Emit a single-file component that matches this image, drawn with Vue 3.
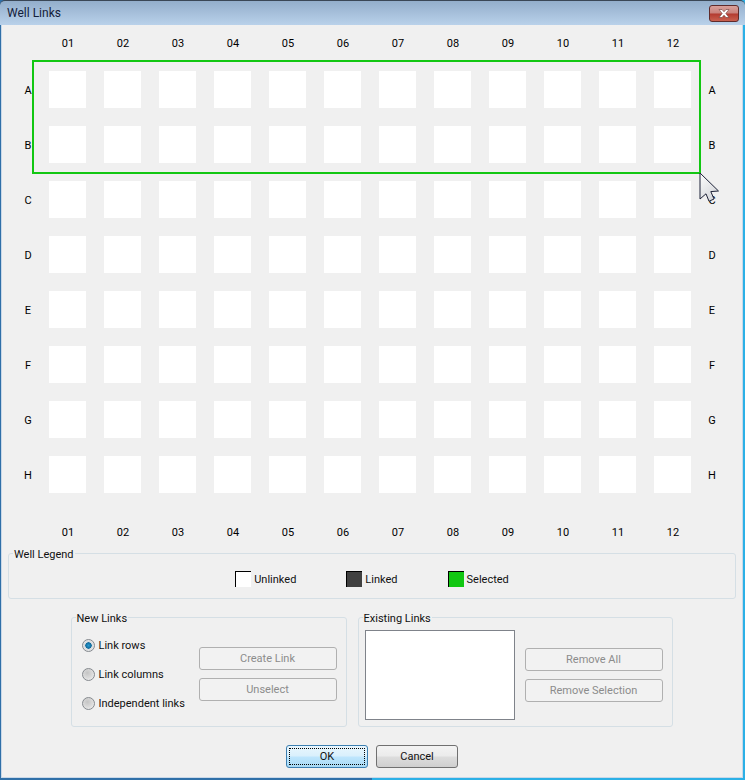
<script setup>
const columns = ['01', '02', '03', '04', '05', '06', '07', '08', '09', '10', '11', '12']
const rows = ['A', 'B', 'C', 'D', 'E', 'F', 'G', 'H']
const legend = [
  { label: 'Unlinked', color: '#ffffff' },
  { label: 'Linked', color: '#404040' },
  { label: 'Selected', color: '#12c712' }
]
const linkModes = [
  { label: 'Link rows', checked: true },
  { label: 'Link columns', checked: false },
  { label: 'Independent links', checked: false }
]
</script>

<template>
  <div class="window">
    <header class="titlebar">
      <span class="title">Well Links</span>
      <button class="close">
        <svg width="16" height="11" viewBox="0 0 16 11">
          <path d="M3 1.5 L6 1.5 L8 3.8 L10 1.5 L13 1.5 L9.8 5.5 L13 9.5 L10 9.5 L8 7.2 L6 9.5 L3 9.5 L6.2 5.5 Z" fill="#ffffff" stroke="#6d3a36" stroke-width="0.6" />
        </svg>
      </button>
    </header>

    <main class="client">
      <section class="plate">
        <div class="corner"></div>
        <div v-for="col in columns" :key="'top' + col" class="col-label">{{ col }}</div>
        <div class="corner"></div>

        <template v-for="row in rows" :key="row">
          <div class="row-label">{{ row }}</div>
          <div v-for="col in columns" :key="row + col" class="cell">
            <div class="well"></div>
          </div>
          <div class="row-label">{{ row }}</div>
        </template>

        <div class="corner"></div>
        <div v-for="col in columns" :key="'bottom' + col" class="col-label col-label-bottom">{{ col }}</div>
        <div class="corner"></div>

        <div class="selection"></div>
      </section>

      <section class="group legend">
        <span class="group-title">Well Legend</span>
        <div v-for="item in legend" :key="item.label" class="legend-item">
          <span class="swatch" :style="{ backgroundColor: item.color }"></span>
          <span>{{ item.label }}</span>
        </div>
      </section>

      <div class="panels">
        <section class="group new-links">
          <span class="group-title">New Links</span>
          <div class="radios">
            <label v-for="mode in linkModes" :key="mode.label" class="radio">
              <span class="radio-dot" :class="{ checked: mode.checked }"></span>
              {{ mode.label }}
            </label>
          </div>
          <div class="buttons">
            <button class="btn" disabled>Create Link</button>
            <button class="btn" disabled>Unselect</button>
          </div>
        </section>

        <section class="group existing-links">
          <span class="group-title">Existing Links</span>
          <div class="listbox"></div>
          <div class="buttons">
            <button class="btn" disabled>Remove All</button>
            <button class="btn" disabled>Remove Selection</button>
          </div>
        </section>
      </div>

      <footer class="actions">
        <button class="action action-default"><span class="focus">OK</span></button>
        <button class="action">Cancel</button>
      </footer>
    </main>

    <svg class="cursor" width="22" height="32" viewBox="0 0 22 32">
      <defs>
        <linearGradient id="cursorFill" x1="0" y1="0" x2="0.6" y2="1">
          <stop offset="0" stop-color="#ffffff" />
          <stop offset="1" stop-color="#d4d6da" />
        </linearGradient>
      </defs>
      <path d="M1 1 L19.5 19 L11.8 19.6 L15 27 L10 29.3 L7 21.8 L1 27 Z" fill="url(#cursorFill)" stroke="#1d2238" stroke-width="1" />
    </svg>
  </div>
</template>

<style>
html, body {
  margin: 0;
  background: #f0f0f0;
}
</style>

<style scoped>
.window {
  position: relative;
  width: 745px;
  height: 780px;
  box-sizing: border-box;
  overflow: hidden;
  display: flex;
  flex-direction: column;
  background: linear-gradient(90deg, #2f6fa8 0%, #2f6fa8 50%, #2bb0e6 50%, #2bb0e6 100%);
  font-family: Roboto, "Open Sans", "Liberation Sans", sans-serif;
  font-size: 11px;
  color: #111111;
}

/* title bar */
.titlebar {
  height: 25px;
  flex: none;
  display: flex;
  align-items: center;
  justify-content: space-between;
  box-sizing: border-box;
  padding: 0 6px 0 7px;
  background: linear-gradient(#93aecb, #b9d1ea);
  border-top: 1px solid #3a4756;
  border-radius: 5px 5px 0 0;
}
.title {
  font-size: 12px;
  color: #14203a;
}
.close {
  width: 30px;
  height: 17px;
  padding: 0;
  display: flex;
  align-items: center;
  justify-content: center;
  border: 1px solid #5f2b2b;
  border-radius: 3px;
  background: linear-gradient(#d9a09a 0%, #c9817b 48%, #b33a2f 52%, #c9604f 100%);
}

/* client area */
.client {
  flex: 1;
  margin: 0 2px 2px 1px;
  border: 1px solid #c9d8e8;
  border-top: none;
  background: #f0f0f0;
  display: flex;
  flex-direction: column;
  align-items: stretch;
}

/* plate */
.plate {
  position: relative;
  display: grid;
  grid-template-columns: 24px repeat(12, 55px) 24px;
  grid-template-rows: 37px repeat(8, 55px) 50px;
  padding-left: 14px;
  justify-content: start;
}
.corner {
  min-width: 0;
}
.col-label,
.row-label {
  display: flex;
  align-items: center;
  justify-content: center;
  color: #000000;
}
.col-label {
  padding-left: 1px;
}
.row-label {
  padding-top: 2px;
}
.col-label-bottom {
  padding-top: 10px;
}
.cell {
  display: flex;
  align-items: center;
  justify-content: center;
}
.well {
  width: 37px;
  height: 37px;
  background: #ffffff;
}
.selection {
  position: absolute;
  left: 30px;
  top: 35px;
  width: 669px;
  height: 114px;
  box-sizing: border-box;
  border: 2px solid #12c712;
}

/* group boxes */
.group {
  position: relative;
  box-sizing: border-box;
  border: 1px solid #d5dfe5;
  border-radius: 3px;
}
.group-title {
  position: absolute;
  top: -7px;
  left: 4px;
  padding: 0 1px;
  background: #f0f0f0;
  line-height: 16px;
}
.legend {
  margin: 1px 6px 0 6px;
  height: 46px;
  padding-top: 17px;
  display: flex;
  align-items: flex-start;
  justify-content: center;
  gap: 50px;
}
.legend-item {
  display: flex;
  align-items: center;
  gap: 3px;
}
.swatch {
  width: 16px;
  height: 16px;
  box-sizing: border-box;
  border-top: 1px solid #000000;
  border-left: 1px solid #000000;
}

.panels {
  display: flex;
  justify-content: center;
  gap: 11px;
  margin-top: 18px;
  padding-right: 1px;
}
.new-links {
  width: 276px;
  height: 110px;
  display: flex;
  align-items: flex-start;
  justify-content: space-between;
  padding: 17px 9px 0 10px;
}
.existing-links {
  width: 315px;
  height: 110px;
  display: flex;
  align-items: flex-start;
  justify-content: space-between;
  padding: 12px 9px 0 6px;
}
.radios {
  display: flex;
  flex-direction: column;
  gap: 9px;
}
.radio {
  display: flex;
  align-items: center;
  gap: 4px;
  height: 20px;
  white-space: nowrap;
}
.radio-dot {
  width: 13px;
  height: 13px;
  box-sizing: border-box;
  border-radius: 50%;
  border: 1px solid #85898e;
  background: radial-gradient(circle at 40% 35%, #c4c4c4 0%, #dcdcdc 55%, #f8f8f8 100%);
}
.radio-dot.checked {
  background: radial-gradient(circle at 50% 50%, #2a9bd0 0%, #0f6a9c 38%, #d6dadd 44%, #f4f4f4 100%);
}
.buttons {
  display: flex;
  flex-direction: column;
  gap: 8px;
}
.new-links .buttons {
  margin-top: 12px;
}
.existing-links .buttons {
  margin-top: 18px;
}
.btn {
  width: 138px;
  height: 23px;
  padding: 0;
  box-sizing: border-box;
  border: 1px solid #b0b0b0;
  border-radius: 3px;
  background: #f2f2f2;
  color: #8c8c8c;
  font: inherit;
}
.listbox {
  width: 150px;
  height: 90px;
  box-sizing: border-box;
  border: 1px solid #7f838a;
  background: #ffffff;
}

/* dialog buttons */
.actions {
  display: flex;
  justify-content: center;
  gap: 8px;
  margin-top: 18px;
}
.action {
  width: 82px;
  height: 23px;
  padding: 0;
  box-sizing: border-box;
  border: 1px solid #707070;
  border-radius: 3px;
  background: linear-gradient(#f3f3f3 0%, #ebebeb 48%, #dddddd 52%, #cfcfcf 100%);
  color: #111111;
  font: inherit;
}
.action-default {
  padding: 2px;
  border-color: #3c7fb1;
  background: linear-gradient(#e9f6fd 0%, #d9f0fc 48%, #bee6fd 52%, #a7d9f5 100%);
}
.focus {
  display: flex;
  height: 100%;
  align-items: center;
  justify-content: center;
  box-sizing: border-box;
  border: 1px dotted #000000;
}

.cursor {
  position: absolute;
  left: 699px;
  top: 172px;
}
</style>
